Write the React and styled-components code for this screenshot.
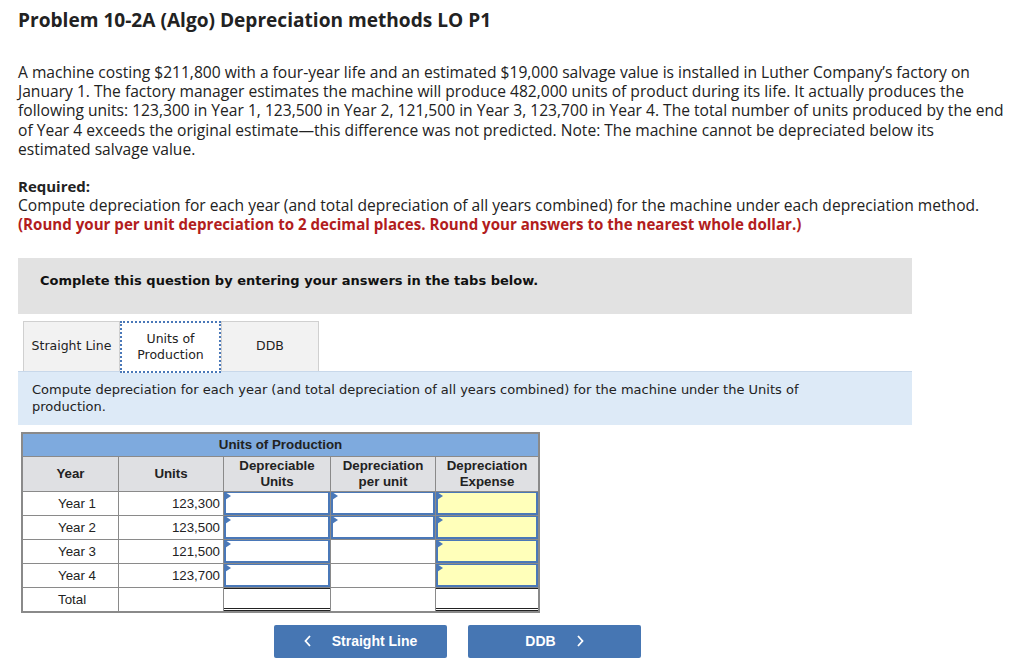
import React from "react";
import styled, { createGlobalStyle } from "styled-components";

const GlobalStyle = createGlobalStyle`
  body {
    margin: 0;
    background: #fff;
    color: #222;
  }
`;

const Page = styled.div`
  width: 1024px;
  padding: 8px 18px 0 18px;
  box-sizing: border-box;
  font-family: "Open Sans", "Liberation Sans", sans-serif;
`;

const Title = styled.h1`
  margin: 0;
  font-size: 19.1px;
  font-weight: 700;
  line-height: 24px;
  color: #222;
`;

const Para = styled.p`
  margin: 31px 0 0 0;
  font-size: 15.6px;
  line-height: 19.2px;
  white-space: nowrap;
`;

const Required = styled.div`
  margin-top: 18px;
  font-size: 15.6px;
  line-height: 19.2px;
  white-space: nowrap;

  .label {
    font-weight: 700;
    font-size: 15px;
  }

  .note {
    color: #b21d1d;
    font-weight: 700;
    font-size: 15.1px;
  }
`;

const QuestionBox = styled.div`
  margin-top: 23px;
  width: 894px;
  height: 56px;
  background: #e2e2e2;
  display: flex;
  align-items: center;
  padding-left: 22px;
  box-sizing: border-box;
  font-family: "DejaVu Sans", Verdana, sans-serif;
  font-size: 13px;
  font-weight: 700;
  color: #111;
  padding-bottom: 10px;
`;

const Tabs = styled.div`
  display: flex;
  margin-top: 7px;
  margin-left: 5px;
  font-family: "DejaVu Sans", Verdana, sans-serif;
  font-size: 12.5px;
  color: #222;
`;

const Tab = styled.div`
  width: ${(p) => p.w}px;
  box-sizing: border-box;
  display: flex;
  align-items: center;
  justify-content: center;
  text-align: center;
  line-height: 16px;
  background: ${(p) => (p.active ? "#fff" : "#f2f2f2")};
  border: ${(p) => (p.active ? "2px dotted #4a78b8" : "1px solid #d0d0d0")};
  border-bottom: ${(p) => (p.active ? "2px dotted #4a78b8" : "none")};
  height: ${(p) => (p.active ? 52 : 50)}px;
  margin-bottom: ${(p) => (p.active ? -2 : 0)}px;
  position: relative;
  z-index: ${(p) => (p.active ? 1 : 0)};
`;

const Instruction = styled.div`
  width: 894px;
  box-sizing: border-box;
  background: #ddeaf7;
  border-top: 1px solid #c8d8ea;
  padding: 9px 14px 10px 14px;
  font-family: "DejaVu Sans", Verdana, sans-serif;
  font-size: 13px;
  line-height: 17px;
  color: #222;
`;

const Table = styled.table`
  margin-top: 7px;
  margin-left: 3px;
  border-collapse: collapse;
  font-family: "Liberation Sans", Arial, sans-serif;
  font-size: 13.3px;
  color: #222;
  border: 2px solid #8a8a8a;
`;

const GroupHead = styled.th`
  background: #7eaade;
  height: 22px;
  padding: 0;
  font-weight: 700;
  text-align: center;
  border: 1px solid #8a8a8a;
`;

const ColHead = styled.th`
  background: #dfe0e3;
  height: 34px;
  padding: 0;
  width: ${(p) => p.w}px;
  font-weight: 700;
  line-height: 16px;
  text-align: center;
  border: 1px solid #8a8a8a;
`;

const Cell = styled.td`
  height: 23px;
  padding: 0 ${(p) => (p.right ? 3 : 0)}px 0 ${(p) => (p.left ? 35 : 0)}px;
  text-align: ${(p) => (p.right ? "right" : p.left ? "left" : "center")};
  border: 1px solid #8a8a8a;
  background: #fff;
`;

const InputCell = styled.td`
  height: 23px;
  padding: 0;
  border: 1px solid #8a8a8a;
  background: #fff;
`;

const InputBox = styled.div`
  position: relative;
  height: 23px;
  box-sizing: border-box;
  border: 2px solid #4a78b8;
  border-width: 1px 2px 2px 2px;
  background: ${(p) => (p.yellow ? "#ffffba" : "#fff")};

  &::before {
    content: "";
    position: absolute;
    left: -1px;
    top: -1px;
    border-left: 6px solid #4a78b8;
    border-top: 4px solid transparent;
    border-bottom: 4px solid transparent;
  }
`;

const TotalBox = styled.div`
  height: 23px;
  box-sizing: border-box;
  border-top: 1px solid #222;
  border-bottom: 3px double #222;
  background: #fff;
`;

const Nav = styled.div`
  display: flex;
  gap: 21px;
  margin-top: 12px;
  margin-left: 256px;
`;

const NavButton = styled.button`
  width: 173px;
  height: 33px;
  border: none;
  border-radius: 2px;
  background: #4676b3;
  color: #fff;
  font-family: "Liberation Sans", Arial, sans-serif;
  font-size: 14px;
  font-weight: 700;
  display: flex;
  align-items: center;
  justify-content: center;
  gap: 20px;
  cursor: pointer;
`;

const Chevron = ({ dir }) => (
  <svg width="8" height="12" viewBox="0 0 8 12">
    <path
      d={dir === "left" ? "M6 1 L1.5 6 L6 11" : "M2 1 L6.5 6 L2 11"}
      stroke="#fff"
      strokeWidth="1.8"
      fill="none"
    />
  </svg>
);

const rows = [
  { year: "Year 1", units: "123,300", perUnit: true },
  { year: "Year 2", units: "123,500", perUnit: true },
  { year: "Year 3", units: "121,500", perUnit: false },
  { year: "Year 4", units: "123,700", perUnit: false },
];

export default function App() {
  return (
    <Page>
      <GlobalStyle />
      <Title>Problem 10-2A (Algo) Depreciation methods LO P1</Title>
      <Para>
        A machine costing $211,800 with a four-year life and an estimated $19,000 salvage value is installed in Luther Company’s factory on
        <br />
        January 1. The factory manager estimates the machine will produce 482,000 units of product during its life. It actually produces the
        <br />
        following units: 123,300 in Year 1, 123,500 in Year 2, 121,500 in Year 3, 123,700 in Year 4. The total number of units produced by the end
        <br />
        of Year 4 exceeds the original estimate—this difference was not predicted. Note: The machine cannot be depreciated below its
        <br />
        estimated salvage value.
      </Para>
      <Required>
        <div className="label">Required:</div>
        <div>
          Compute depreciation for each year (and total depreciation of all years combined) for the machine under each depreciation method.
        </div>
        <div className="note">
          (Round your per unit depreciation to 2 decimal places. Round your answers to the nearest whole dollar.)
        </div>
      </Required>
      <QuestionBox>Complete this question by entering your answers in the tabs below.</QuestionBox>
      <Tabs>
        <Tab w={97}>Straight Line</Tab>
        <Tab w={101} active>
          Units of
          <br />
          Production
        </Tab>
        <Tab w={98}>DDB</Tab>
      </Tabs>
      <Instruction>
        Compute depreciation for each year (and total depreciation of all years combined) for the machine under the Units of
        <br />
        production.
      </Instruction>
      <Table>
        <thead>
          <tr>
            <GroupHead colSpan={5}>Units of Production</GroupHead>
          </tr>
          <tr>
            <ColHead w={95}>Year</ColHead>
            <ColHead w={104}>Units</ColHead>
            <ColHead w={106}>
              Depreciable
              <br />
              Units
            </ColHead>
            <ColHead w={104}>
              Depreciation
              <br />
              per unit
            </ColHead>
            <ColHead w={102}>
              Depreciation
              <br />
              Expense
            </ColHead>
          </tr>
        </thead>
        <tbody>
          {rows.map((r) => (
            <tr key={r.year}>
              <Cell left>{r.year}</Cell>
              <Cell right>{r.units}</Cell>
              <InputCell>
                <InputBox />
              </InputCell>
              {r.perUnit ? (
                <InputCell>
                  <InputBox />
                </InputCell>
              ) : (
                <Cell />
              )}
              <InputCell>
                <InputBox yellow />
              </InputCell>
            </tr>
          ))}
          <tr>
            <Cell left>Total</Cell>
            <Cell />
            <InputCell>
              <TotalBox />
            </InputCell>
            <Cell />
            <InputCell>
              <TotalBox />
            </InputCell>
          </tr>
        </tbody>
      </Table>
      <Nav>
        <NavButton>
          <Chevron dir="left" />
          Straight Line
        </NavButton>
        <NavButton>
          DDB
          <Chevron dir="right" />
        </NavButton>
      </Nav>
    </Page>
  );
}
